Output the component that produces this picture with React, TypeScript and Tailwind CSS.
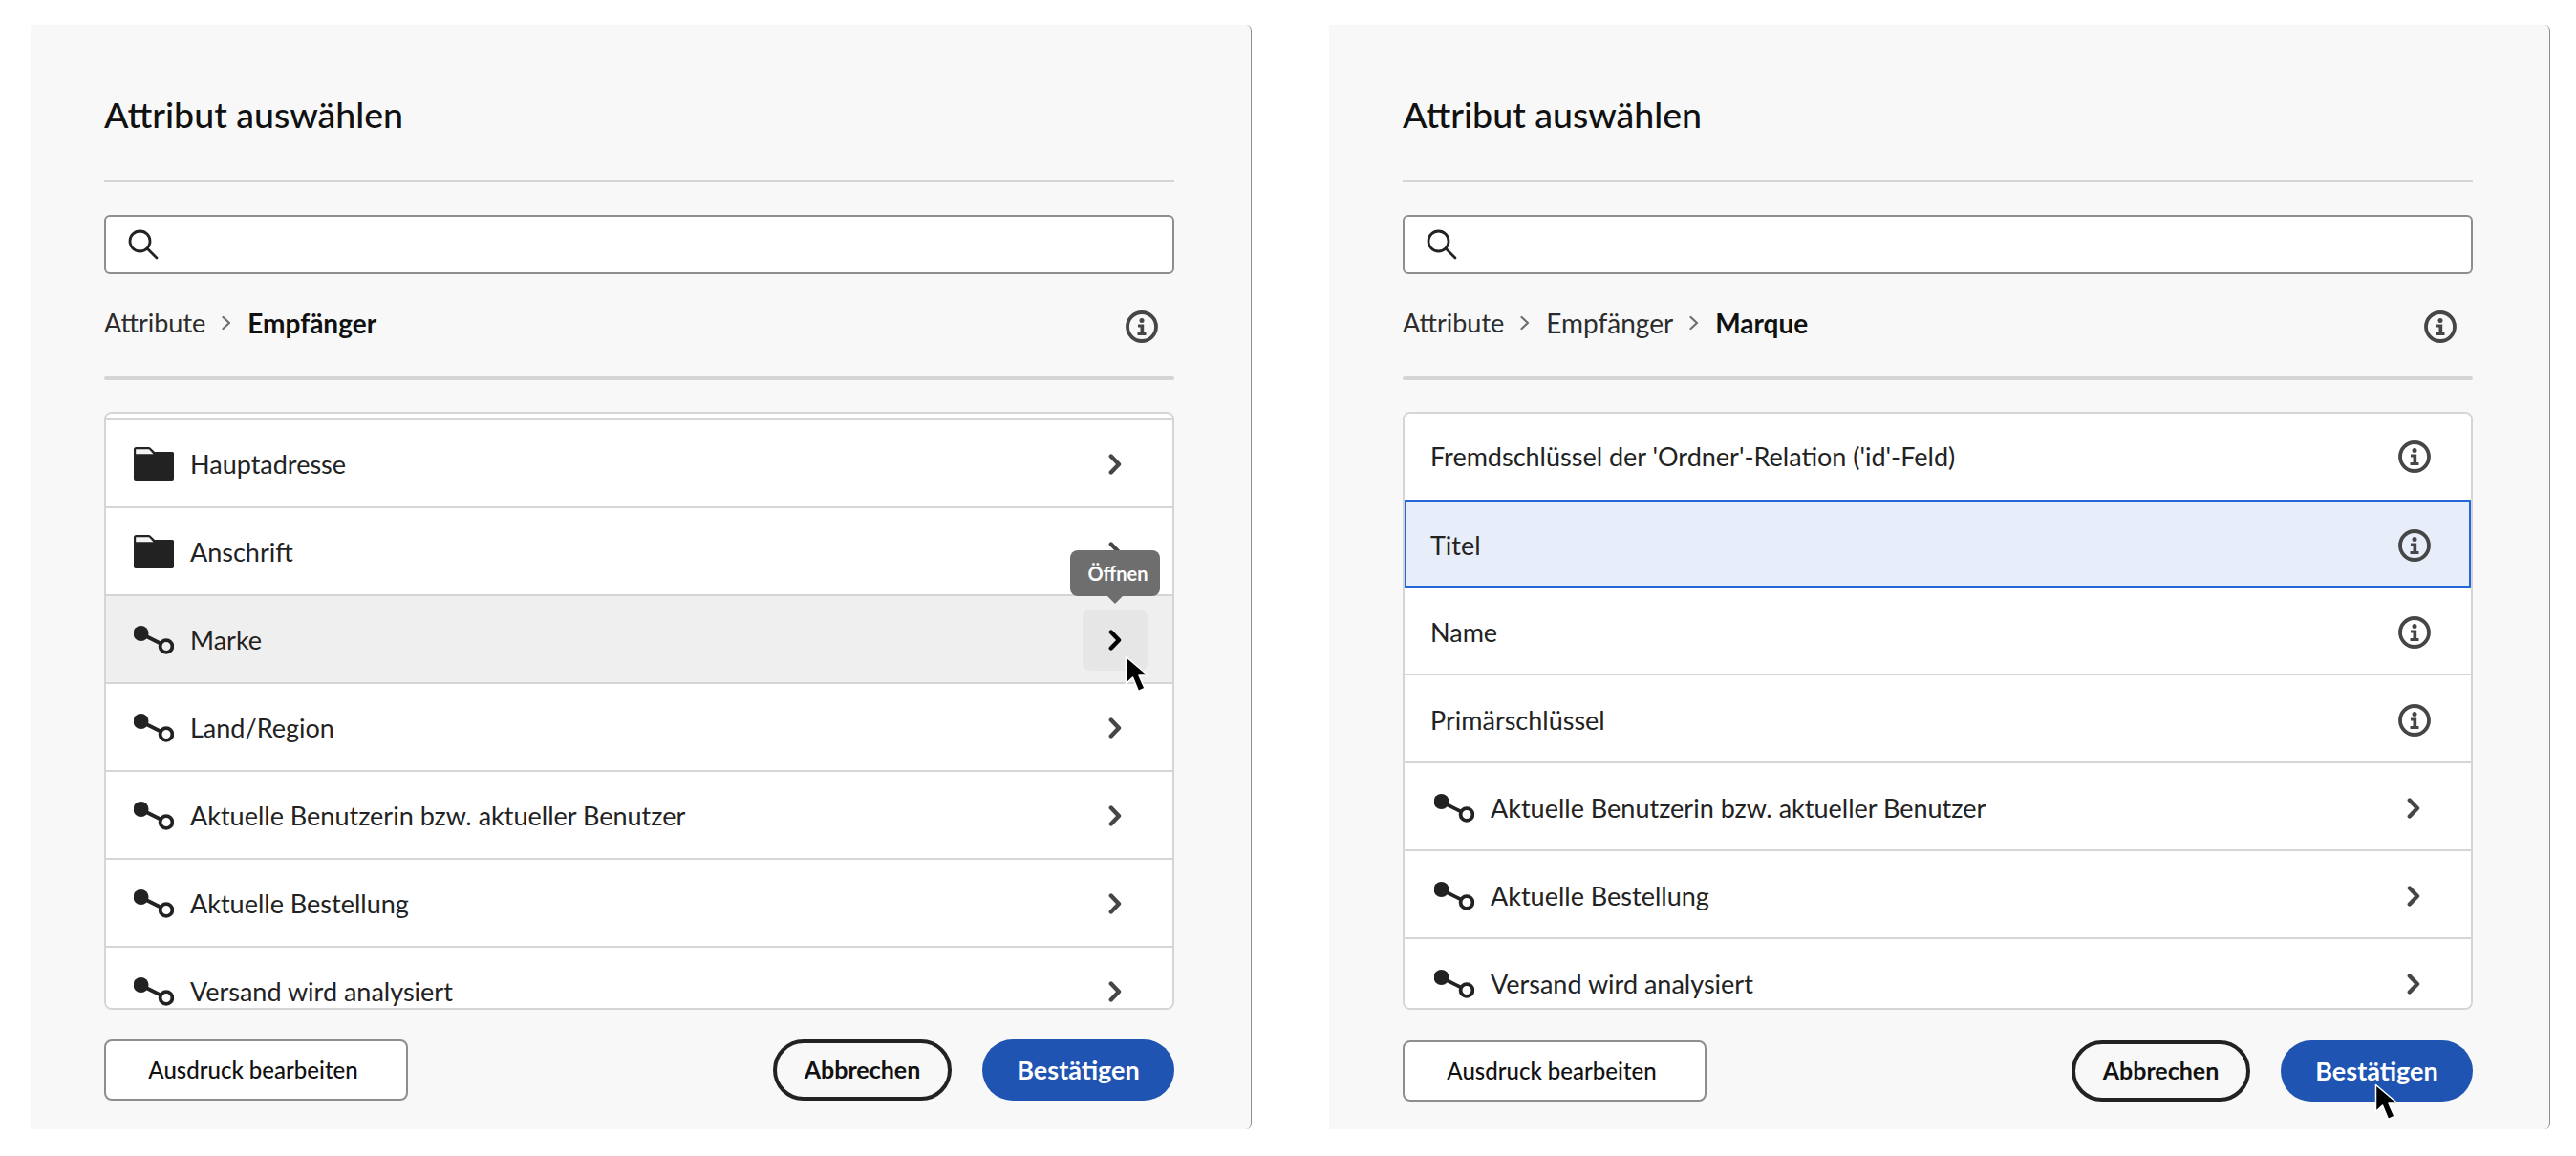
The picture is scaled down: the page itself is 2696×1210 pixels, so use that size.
import type { ReactNode } from "react";

type IconKind = "folder" | "relation" | "none";

interface RowData {
  label: string;
  icon: IconKind;
  action: "chevron" | "info";
  state?: "hover" | "selected";
  first?: boolean;
}

const leftRows: RowData[] = [
  { label: "Hauptadresse", icon: "folder", action: "chevron" },
  { label: "Anschrift", icon: "folder", action: "chevron" },
  { label: "Marke", icon: "relation", action: "chevron", state: "hover" },
  { label: "Land/Region", icon: "relation", action: "chevron" },
  { label: "Aktuelle Benutzerin bzw. aktueller Benutzer", icon: "relation", action: "chevron" },
  { label: "Aktuelle Bestellung", icon: "relation", action: "chevron" },
  { label: "Versand wird analysiert", icon: "relation", action: "chevron" },
];

const rightRows: RowData[] = [
  { label: "Fremdschlüssel der 'Ordner'-Relation ('id'-Feld)", icon: "none", action: "info", first: true },
  { label: "Titel", icon: "none", action: "info", state: "selected" },
  { label: "Name", icon: "none", action: "info" },
  { label: "Primärschlüssel", icon: "none", action: "info" },
  { label: "Aktuelle Benutzerin bzw. aktueller Benutzer", icon: "relation", action: "chevron" },
  { label: "Aktuelle Bestellung", icon: "relation", action: "chevron" },
  { label: "Versand wird analysiert", icon: "relation", action: "chevron" },
];

function SearchIcon() {
  return (
    <svg width="32" height="32" viewBox="0 0 32 32" fill="none" stroke="#222" strokeWidth="2.8" strokeLinecap="round">
      <circle cx="12.5" cy="12.5" r="10.5" />
      <path d="M20.5 20.5 30 30" />
    </svg>
  );
}

function InfoIcon() {
  return (
    <svg width="34" height="34" viewBox="0 0 34 34" fill="none" className="shrink-0">
      <circle cx="17" cy="17" r="15" stroke="#464646" strokeWidth="3.8" />
      <circle cx="17" cy="10.5" r="2.5" fill="#464646" />
      <path d="M13 14.600h6.200V23H21.500v3h-9v-3h3v-5.400H13Z" fill="#464646" />
    </svg>
  );
}

function Chevron({ color = "#464646" }: { color?: string }) {
  return (
    <svg width="14" height="22" viewBox="0 0 14 22" fill="none" stroke={color} strokeWidth="4.4" strokeLinecap="round" strokeLinejoin="round">
      <path d="M2.800 2.500 11 11l-8.200 8.500" />
    </svg>
  );
}

function SmallChevron() {
  return (
    <svg width="10" height="16" viewBox="0 0 10 16" fill="none" stroke="#6d6d6d" strokeWidth="2.2" strokeLinecap="round" strokeLinejoin="round" className="shrink-0">
      <path d="M1.500 2 8 8l-6.500 6" />
    </svg>
  );
}

function FolderIcon() {
  return (
    <svg width="42" height="35" viewBox="0 0 42 35" className="shrink-0">
      <path d="M0 2.500A2.500 2.500 0 0 1 2.500 0h13.200c.8 0 1.500.3 2 .9L22 5h18.500A1.500 1.500 0 0 1 42 6.500V33a2 2 0 0 1-2 2H2a2 2 0 0 1-2-2Z" fill="#222" />
      <path d="M2.200 2.200h13.800l4.500 5H2.200Z" fill="#f4f4f4" />
    </svg>
  );
}

function RelationIcon() {
  return (
    <svg width="42" height="30" viewBox="0 0 42 30" fill="none" className="shrink-0">
      <circle cx="7.5" cy="8" r="8" fill="#222" />
      <path d="M10 9.500 28 18.500" stroke="#222" strokeWidth="3.800" />
      <circle cx="34" cy="21.500" r="6.400" stroke="#222" strokeWidth="3.800" />
    </svg>
  );
}

function Cursor() {
  return (
    <svg width="26" height="42" viewBox="0 0 26 42" className="pointer-events-none">
      <path d="M1.500 1.500v28l7-6.500 6 14.500 6.500-3-6-13.500h9.500Z" fill="#000" stroke="#fff" strokeWidth="1.500" strokeLinejoin="round" />
    </svg>
  );
}

function rowPadding(row: RowData, spacer?: boolean) {
  if (row.state === "selected") return "pl-[25px] pr-[40px] pt-[3px]";
  if (row.first) return "pl-[27px] pr-[42px]";
  if (row.action === "info") return "pl-[27px] pr-[42px] pt-[3px]";
  return spacer ? "pl-[29px] pr-[53px] pt-[1px]" : "pl-[31px] pr-[53px] pt-[3px]";
}

function Row({ row, spacer }: { row: RowData; spacer?: boolean }) {
  const hover = row.state === "hover";
  const selected = row.state === "selected";
  const base = selected
    ? "h-[92px] bg-[#e8eef9] border-2 border-[#2468d8]"
    : row.first
      ? "h-[90px] bg-white"
      : hover
        ? "h-[92px] bg-[#efefef] border-b-2 border-[#d5d5d5]"
        : "h-[92px] bg-white border-b-2 border-[#d5d5d5]";

  return (
    <div className={`${base} flex shrink-0 items-center ${rowPadding(row, spacer)}`}>
      {row.icon === "folder" && <FolderIcon />}
      {row.icon === "relation" && <RelationIcon />}
      <span className={`flex-1 text-[27px] leading-[36px] text-[#222] ${row.icon === "none" ? "" : "ml-[17px]"}`}>
        {row.label}
      </span>
      {row.action === "info" ? (
        <InfoIcon />
      ) : hover ? (
        <div className="relative -mr-[27px] flex h-[64px] w-[68px] items-center justify-center rounded-lg bg-[#e6e6e6]">
          <Chevron color="#000" />
          <div className="absolute bottom-[78px] left-[-13px] z-20 flex h-[48px] w-[94px] items-center justify-center rounded-lg bg-[#6e6e6e] pl-[6px] text-[20px] font-bold text-white">
            Öffnen
            <span className="absolute bottom-[-8px] left-[39px] h-0 w-0 border-x-[8px] border-t-[8px] border-x-transparent border-t-[#6e6e6e]" />
          </div>
          <div className="absolute left-[44px] top-[48px] z-20">
            <Cursor />
          </div>
        </div>
      ) : (
        <Chevron />
      )}
    </div>
  );
}

function Panel({
  crumbs,
  rows,
  spacer,
  cursor,
  footerClass,
}: {
  crumbs: string[];
  rows: RowData[];
  spacer?: boolean;
  cursor?: boolean;
  footerClass: string;
}) {
  const crumbItems: ReactNode[] = crumbs.map((c, i) => {
    const last = i === crumbs.length - 1;
    return (
      <span key={c} className="flex items-center">
        {i > 0 && (
          <span className="mx-[17px]">
            <SmallChevron />
          </span>
        )}
        <span className={last ? "font-bold text-[#111]" : i === 0 ? "text-[27px] text-[#2c2c2c]" : "text-[#2c2c2c]"}>{c}</span>
      </span>
    );
  });

  return (
    <div className="flex h-[1156px] w-[1278px] shrink-0 flex-col rounded-r-md border-r border-[#8e8e8e] bg-[#f8f8f8] pl-[77px] pr-[80px] pt-[70px]">
      <h1 className="h-[48px] text-[37.5px] font-medium leading-[48px] text-[#111]">Attribut auswählen</h1>
      <div className="mt-[44px] h-[2px] bg-[#d5d5d5]" />
      <div className="mt-[35px] flex h-[62px] items-center rounded-md border-2 border-[#8e8e8e] bg-white pl-[23px]">
        <SearchIcon />
      </div>
      <div className="mt-[31px] flex h-[40px] items-center justify-between pr-[17px] text-[28px]">
        <div className="flex items-center">{crumbItems}</div>
        <div className="translate-y-[4px]">
          <InfoIcon />
        </div>
      </div>
      <div className="mt-[36px] h-[4px] rounded-full bg-[#d5d5d5]" />
      <div className="mt-[33px] flex h-[626px] flex-col overflow-hidden rounded-lg border-2 border-[#d5d5d5] bg-white">
        {spacer && <div className="h-[7px] shrink-0 border-b-2 border-[#d5d5d5] bg-white" />}
        {rows.map((r) => (
          <Row key={r.label} row={r} spacer={spacer} />
        ))}
      </div>
      <div className={`flex items-center justify-between ${footerClass}`}>
        <button className="h-[64px] w-[318px] rounded-lg border-2 border-[#8e8e8e] bg-white pr-[6px] text-[24px] font-medium text-[#111]">
          Ausdruck bearbeiten
        </button>
        <div className="flex gap-[32px]">
          <button className="h-[64px] w-[187px] rounded-full border-[4px] border-[#222] text-[25px] font-bold text-[#111]">
            Abbrechen
          </button>
          <div className="relative">
            <button className="h-[64px] w-[201px] rounded-full bg-[#2054b2] text-[27px] font-bold text-white">
              Bestätigen
            </button>
            {cursor && (
              <div className="absolute left-[98px] top-[45px]">
                <Cursor />
              </div>
            )}
          </div>
        </div>
      </div>
    </div>
  );
}

export default function App() {
  return (
    <div className="flex h-[1210px] w-[2696px] gap-[81px] overflow-hidden bg-white pl-[32px] pt-[26px] font-[family-name:Lato,sans-serif]">
      <Panel crumbs={["Attribute", "Empfänger"]} rows={leftRows} spacer footerClass="mt-[31px]" />
      <Panel crumbs={["Attribute", "Empfänger", "Marque"]} rows={rightRows} cursor footerClass="mt-[32px]" />
    </div>
  );
}
